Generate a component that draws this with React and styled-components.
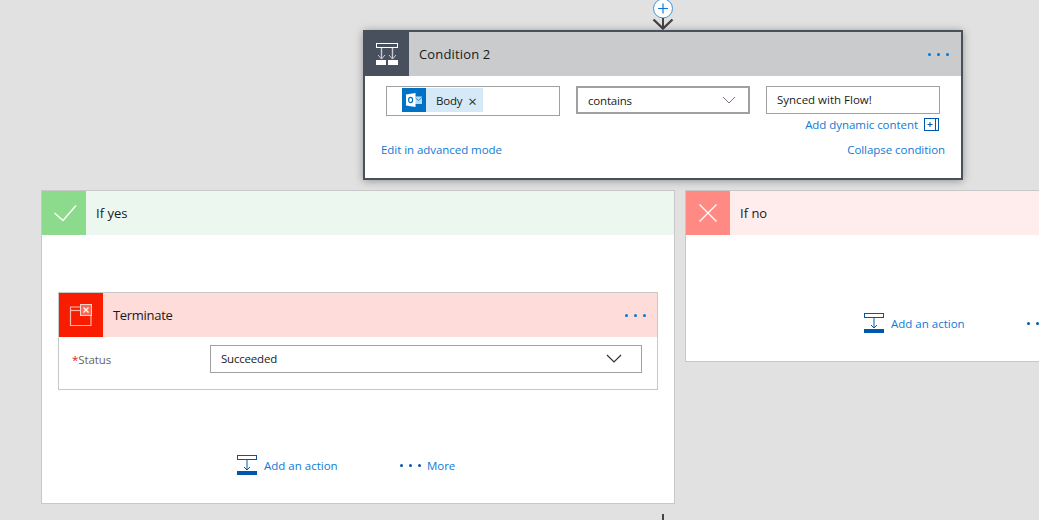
import React from 'react';
import styled, { createGlobalStyle } from 'styled-components';

const GlobalStyle = createGlobalStyle`
  html, body {
    margin: 0;
    padding: 0;
    background: #e1e1e1;
  }
  body {
    font-family: "Open Sans", "Noto Sans", sans-serif;
    font-size: 12px;
    color: #1a1a1a;
  }
`;

const Canvas = styled.div`
  width: 1039px;
  height: 520px;
  overflow: hidden;
  background: #e1e1e1;
`;

const TopStep = styled.div`
  display: flex;
  flex-direction: column;
  align-items: center;
  width: 600px;
  margin-left: 363px;
`;

const Connector = styled.svg`
  display: block;
  width: 24px;
  height: 30px;
`;

const Card = styled.div`
  width: 100%;
  box-sizing: border-box;
  background: #fff;
  border: 2px solid #47505c;
  box-shadow: 0 1px 8px rgba(0, 0, 0, 0.35);
  position: relative;
  z-index: 2;
`;

const Header = styled.div`
  display: flex;
  align-items: center;
  height: 44px;
  background: ${p => p.$bg};
`;

const IconBox = styled.div`
  display: flex;
  align-items: center;
  justify-content: center;
  flex: none;
  width: 44px;
  height: 44px;
  background: ${p => p.$bg};
`;

const Title = styled.div`
  flex: 1;
  padding-left: 10px;
  font-size: 13px;
  letter-spacing: ${p => p.$ls || 0}px;
  color: #1a1a1a;
`;

const Dots = styled.div`
  display: flex;
  gap: 6px;
  margin-right: ${p => p.$right || 0}px;
  span {
    width: 3px;
    height: 3px;
    border-radius: 50%;
    background: ${p => p.$color || '#0078d7'};
  }
`;

const FieldRow = styled.div`
  display: grid;
  grid-template-columns: 174px 174px 174px;
  column-gap: 16px;
  box-sizing: border-box;
  padding: 10px 21px 0;
  height: 55px;
`;

const Field = styled.div`
  box-sizing: border-box;
  display: flex;
  align-items: center;
  height: ${p => p.$h || 28}px;
  padding-left: ${p => p.$pl || 10}px;
  padding-bottom: ${p => p.$pb || 0}px;
  background: #fff;
  border: ${p => p.$thick ? 2 : 1}px solid #a0a0a0;
  font-size: 11.5px;
  letter-spacing: ${p => p.$ls || 0}px;
  color: #1a1a1a;
`;

const Chip = styled.div`
  display: flex;
  align-items: center;
  height: 24px;
  background: #d6e9f7;
  padding-right: 6px;
  font-size: 11.5px;
  letter-spacing: -0.2px;
`;

const ChipLogo = styled.div`
  display: flex;
  align-items: center;
  justify-content: center;
  width: 24px;
  height: 24px;
  background: #0072c6;
  margin-right: 10px;
`;

const ChipClose = styled.span`
  margin-left: 6px;
  margin-top: 2px;
  font-size: 15px;
  line-height: 1;
  color: #333;
`;

const Chevron = styled.svg`
  margin-left: auto;
  margin-right: ${p => p.$right}px;
`;

const DynamicLine = styled.div`
  display: flex;
  align-items: center;
  justify-content: flex-end;
  gap: 6px;
  height: 16px;
  margin-top: 2px;
  padding-right: 1px;
`;

const Link = styled.a`
  font-size: 11.5px;
  letter-spacing: -0.05px;
  color: #0f7ad6;
`;

const PlusBox = styled.svg`
  display: block;
`;

const CardFooter = styled.div`
  display: flex;
  justify-content: space-between;
  align-items: center;
  height: 20px;
  margin-top: 8px;
  padding: 0 16px 19px;
`;

const Branches = styled.div`
  display: flex;
  align-items: flex-start;
  gap: 10px;
  margin-top: 10px;
  padding-left: 41px;
`;

const Branch = styled.div`
  box-sizing: border-box;
  flex: none;
  width: ${p => p.$w}px;
  height: ${p => p.$h}px;
  background: #fff;
  border: 1px solid #c8c8c8;
`;

const BranchBody = styled.div`
  padding: ${p => p.$pad};
`;

const ActionCard = styled.div`
  box-sizing: border-box;
  height: 98px;
  border: 1px solid #c8c8c8;
`;

const StatusRow = styled.div`
  display: flex;
  align-items: center;
  padding: 8px 15px 0 13px;
`;

const StatusLabel = styled.div`
  width: 138px;
  font-size: 11.5px;
  letter-spacing: -0.1px;
  color: #666;
  i {
    font-style: normal;
    color: #e81123;
  }
`;

const StatusField = styled(Field)`
  flex: 1;
`;

const Actions = styled.div`
  display: flex;
  align-items: center;
  height: 20px;
  margin-top: ${p => p.$top}px;
  padding-left: ${p => p.$left}px;
`;

const AddLink = styled(Link)`
  margin-left: 7px;
  width: 74px;
  letter-spacing: 0;
  white-space: nowrap;
`;

const MoreGroup = styled.div`
  display: flex;
  align-items: center;
  gap: 6px;
  margin-left: 62px;
`;

const BottomLine = styled.div`
  width: 2px;
  height: 6px;
  margin: 10px 0 0 662px;
  background: #444;
`;

const ConditionIcon = () => (
  <svg width="24" height="24" viewBox="0 0 24 24" fill="none">
    <rect x="1.5" y="1.5" width="21" height="4" stroke="#fff" />
    <path d="M6.5 6v11M17.5 6v11" stroke="#c8ccd0" strokeWidth="1.4" />
    <path d="M3 13l3.5 4 3.5-4M14 13l3.5 4 3.5-4" stroke="#c8ccd0" />
    <rect x="1" y="18" width="10" height="5" fill="#fff" />
    <rect x="13" y="18" width="10" height="5" fill="#fff" />
  </svg>
);

const CheckIcon = () => (
  <svg width="26" height="20" viewBox="0 0 26 20" fill="none">
    <path d="M3.5 10l8.5 7.5L25 2.5" stroke="#fff" strokeWidth="1.4" />
  </svg>
);

const CrossIcon = () => (
  <svg width="20" height="20" viewBox="0 0 20 20" fill="none">
    <path d="M1.5 1.5l17 17M18.5 1.5l-17 17" stroke="#fff" strokeWidth="1.3" />
  </svg>
);

const TerminateIcon = () => (
  <svg width="24" height="24" viewBox="0 0 24 24" fill="none">
    <path d="M11 4H1.5v18.5h20.5V13" stroke="#ffb8b0" strokeWidth="1.2" />
    <path d="M1.5 7.5H11" stroke="#ffb8b0" strokeWidth="1.2" />
    <rect x="11.5" y="1.5" width="11" height="11" fill="#fb6a55" stroke="#ffd2cc" />
    <path d="M14.5 4.5l5 5M19.5 4.5l-5 5" stroke="#fff" strokeWidth="1.2" />
  </svg>
);

const OutlookIcon = () => (
  <svg width="16" height="16" viewBox="0 0 16 16" fill="none">
    <rect x="9" y="4.5" width="7" height="7.5" fill="#bcd9f0" />
    <path d="M9 5.5l3.5 3 3.5-3" stroke="#0072c6" strokeWidth="0.8" />
    <path d="M0 2.5l9.5-1.5v14L0 13.5z" fill="#fff" />
    <ellipse cx="4.6" cy="8" rx="2" ry="2.6" stroke="#0072c6" strokeWidth="1.2" />
  </svg>
);

const AddActionIcon = () => (
  <svg width="20" height="20" viewBox="0 0 20 20" fill="none">
    <rect x="0.5" y="0.5" width="19" height="4" stroke="#0058ad" />
    <path d="M10 5v10" stroke="#0058ad" />
    <path d="M7 12l3 3 3-3" stroke="#0058ad" />
    <rect x="0" y="16" width="20" height="4" fill="#0058ad" />
  </svg>
);

const ThreeDots = ({ color, right }) => (
  <Dots $color={color} $right={right}>
    <span />
    <span />
    <span />
  </Dots>
);

const ActionRow = ({ top, left }) => (
  <Actions $top={top} $left={left}>
    <AddActionIcon />
    <AddLink>Add an action</AddLink>
    <MoreGroup>
      <ThreeDots color="#0058ad" />
      <Link>More</Link>
    </MoreGroup>
  </Actions>
);

export default function App() {
  return (
    <Canvas>
      <GlobalStyle />
      <TopStep>
        <Connector viewBox="0 0 24 30" fill="none">
          <circle cx="12" cy="8.5" r="9.5" fill="#fff" stroke="#3a96dd" />
          <path d="M12 3.5v10M7 8.5h10" stroke="#0f7ad6" strokeWidth="1.2" />
          <path d="M2.5 19.5l9.5 9 9.5-9" stroke="#444" strokeWidth="2.4" />
          <path d="M12 18v10" stroke="#444" strokeWidth="2" />
        </Connector>
        <Card>
          <Header $bg="#c9cbcd">
            <IconBox $bg="#47505c">
              <ConditionIcon />
            </IconBox>
            <Title $ls={0.15}>Condition 2</Title>
            <ThreeDots right={12} />
          </Header>
          <FieldRow>
            <Field $h={30} $pl={15} $pb={2}>
              <Chip>
                <ChipLogo>
                  <OutlookIcon />
                </ChipLogo>
                Body
                <ChipClose>×</ChipClose>
              </Chip>
            </Field>
            <Field $thick $ls={-0.2}>
              contains
              <Chevron $right={12} width="14" height="8" viewBox="0 0 14 8" fill="none">
                <path d="M1 1l6 6 6-6" stroke="#8a6d8a" />
              </Chevron>
            </Field>
            <div>
              <Field $pb={2}>Synced with Flow!</Field>
              <DynamicLine>
                <Link>Add dynamic content</Link>
                <PlusBox width="15" height="13" viewBox="0 0 15 13" fill="none">
                  <rect x="0.5" y="0.5" width="14" height="12" stroke="#0058ad" />
                  <path d="M11.5 0.5v12" stroke="#0058ad" />
                  <path d="M3.5 6.5h5M6 4v5" stroke="#0058ad" />
                </PlusBox>
              </DynamicLine>
            </div>
          </FieldRow>
          <CardFooter>
            <Link>Edit in advanced mode</Link>
            <Link>Collapse condition</Link>
          </CardFooter>
        </Card>
      </TopStep>
      <Branches>
        <Branch $w={634} $h={314}>
          <Header $bg="#ecf7ef">
            <IconBox $bg="#8cdb8c">
              <CheckIcon />
            </IconBox>
            <Title>If yes</Title>
          </Header>
          <BranchBody $pad="57px 16px 0">
            <ActionCard>
              <Header $bg="#fedcd9">
                <IconBox $bg="#f81d00">
                  <TerminateIcon />
                </IconBox>
                <Title $ls={-0.3}>Terminate</Title>
                <ThreeDots right={11} />
              </Header>
              <StatusRow>
                <StatusLabel>
                  <i>*</i>Status
                </StatusLabel>
                <StatusField $pb={2} $ls={-0.2}>
                  Succeeded
                  <Chevron $right={19} width="16" height="9" viewBox="0 0 16 9" fill="none">
                    <path d="M1 1l7 7 7-7" stroke="#333" strokeWidth="1.2" />
                  </Chevron>
                </StatusField>
              </StatusRow>
            </ActionCard>
            <ActionRow top={65} left={179} />
          </BranchBody>
        </Branch>
        <Branch $w={400} $h={172}>
          <Header $bg="#ffecec">
            <IconBox $bg="#ff8a84">
              <CrossIcon />
            </IconBox>
            <Title>If no</Title>
          </Header>
          <BranchBody $pad="78px 0 0">
            <ActionRow top={0} left={178} />
          </BranchBody>
        </Branch>
      </Branches>
      <BottomLine />
    </Canvas>
  );
}
